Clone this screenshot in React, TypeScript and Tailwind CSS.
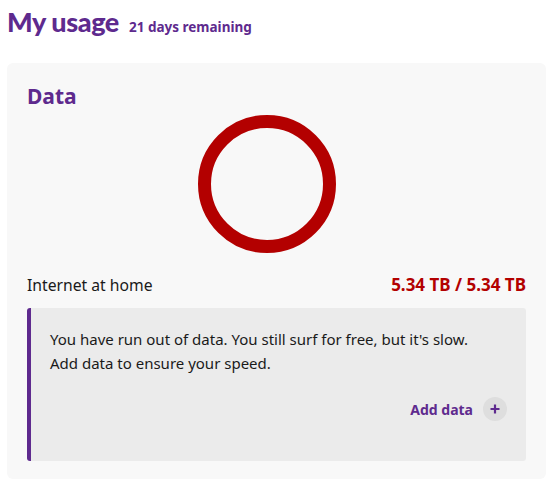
import React from "react";

export default function App() {
  return (
    <div className="w-[552px] h-[489px] bg-white text-[#1a1a1a]" style={{ fontFamily: '"Noto Sans", sans-serif' }}>
      <div className="flex items-baseline gap-[10px] pl-[7px] pt-[4px]">
        <h1 className="text-[27px] font-black text-[#5e2a8e] leading-[36px] tracking-[-0.4px]" style={{ fontFamily: 'Lato, sans-serif' }}>My usage</h1>
        <span className="text-[13.5px] font-bold text-[#5e2a8e]">21 days remaining</span>
      </div>
      <div className="ml-[7px] w-[539px] mt-[23px] h-[416px] rounded-[6px] bg-[#f8f8f8] px-[20px] pt-[19px]">
        <h2 className="text-[21px] font-bold text-[#5e2a8e] leading-[28px]">Data</h2>
        <div className="flex justify-center mt-[4px]">
          <svg width="140" height="140" viewBox="0 0 140 140" className="ml-[-20px]">
            <circle cx="70" cy="70" r="62.5" fill="none" stroke="#b30000" strokeWidth="13" />
          </svg>
        </div>
        <div className="flex justify-between items-center mt-[20px] leading-[22px]">
          <span className="text-[15.7px]">Internet at home</span>
          <span className="text-[17px] font-bold text-[#b30000]">5.34 TB / 5.34 TB</span>
        </div>
        <div className="mt-[12px] h-[153px] rounded-[3px] border-l-[4px] border-[#5e2a8e] bg-[#ebebeb] pl-[19px] pr-[20px] pt-[19px]">
          <p className="text-[15px] leading-[24px]">
            You have run out of data. You still surf for free, but it's slow.
            <br />
            Add data to ensure your speed.
          </p>
          <div className="flex justify-end items-center gap-[10px] mt-[22px]">
            <span className="text-[14px] font-bold text-[#5e2a8e]">Add data</span>
            <span className="flex items-center justify-center w-[24px] h-[24px] rounded-full bg-[#dedede] mr-[-1px]">
              <svg width="10" height="10" viewBox="0 0 10 10">
                <path d="M5 0.5v9M0.5 5h9" stroke="#5e2a8e" strokeWidth="2.2" />
              </svg>
            </span>
          </div>
        </div>
      </div>
    </div>
  );
}
